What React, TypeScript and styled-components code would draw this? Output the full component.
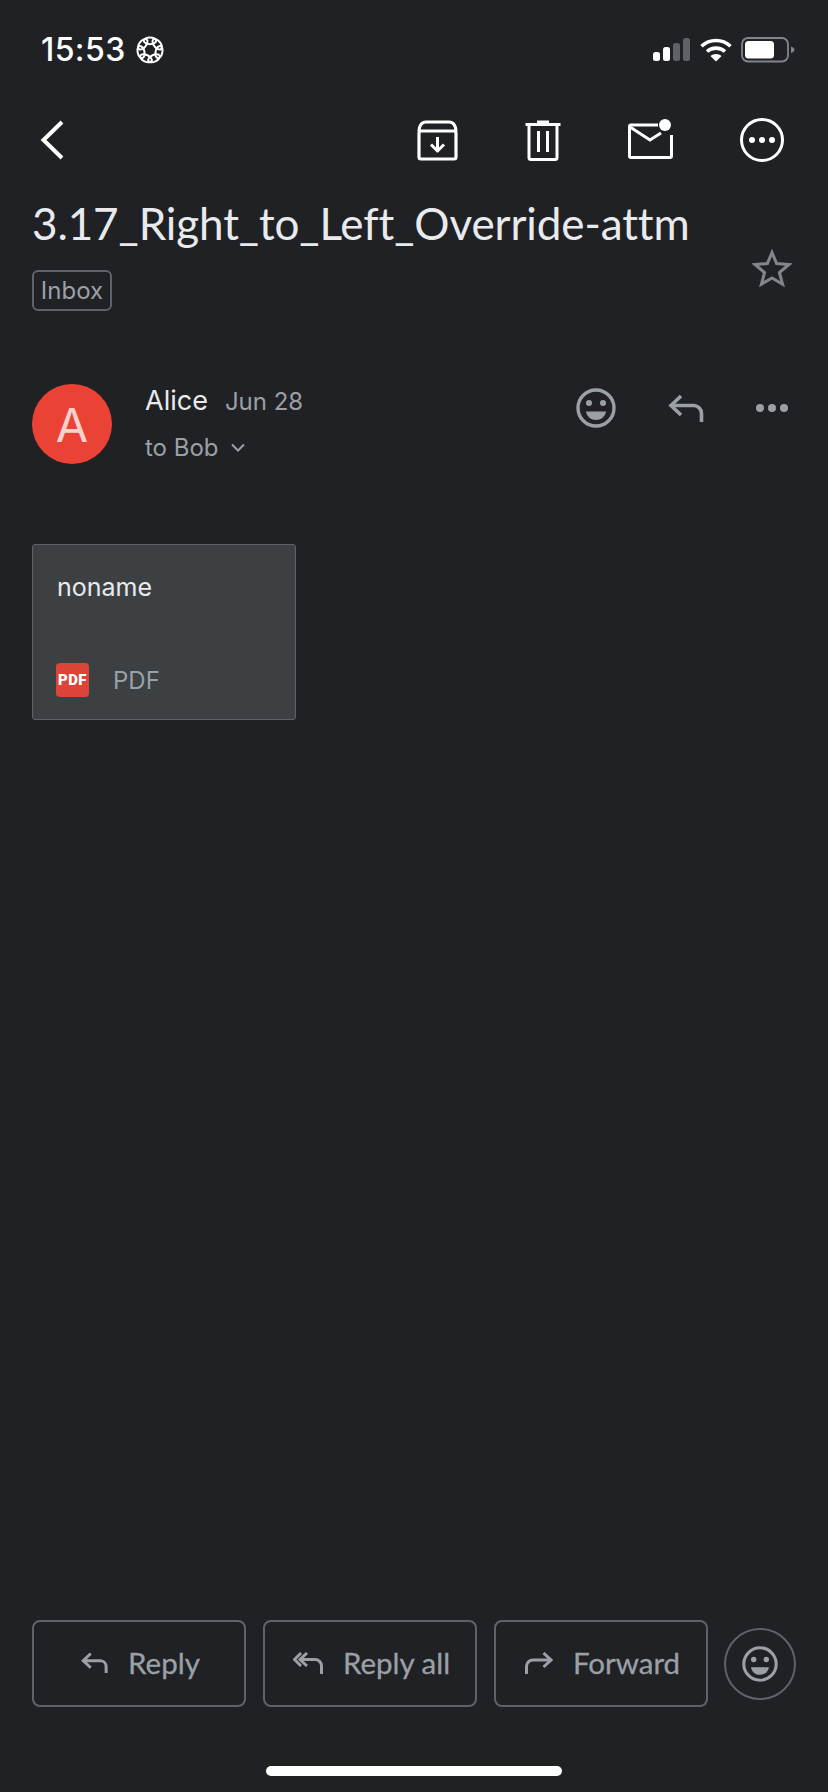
import React from "react";
import styled, { createGlobalStyle } from "styled-components";

const Global = createGlobalStyle`
  html, body { margin: 0; padding: 0; background: #202124; }
  * { box-sizing: border-box; }
`;

const Page = styled.div`
  width: 828px;
  height: 1792px;
  background: #202124;
  display: flex;
  flex-direction: column;
  font-family: Inter, "Liberation Sans", sans-serif;
  overflow: hidden;
`;

const StatusBar = styled.div`
  height: 100px;
  padding: 30px 33px 0 41px;
  display: flex;
  justify-content: space-between;
  align-items: flex-start;
`;
const StatusLeft = styled.div`
  display: flex;
  align-items: center;
  gap: 10px;
  height: 40px;
`;
const Time = styled.span`
  font-size: 32px;
  font-weight: 500;
  color: #fff;
  line-height: 40px;
  letter-spacing: 0.4px;
`;
const StatusRight = styled.div`
  display: flex;
  align-items: center;
  gap: 9.5px;
  height: 40px;
`;

const Toolbar = styled.div`
  height: 80px;
  padding: 0 44px 0 40px;
  display: flex;
  align-items: center;
  justify-content: space-between;
`;
const ToolGroup = styled.div`
  display: flex;
  align-items: center;
  gap: 67px;
`;

const SubjectRow = styled.div`
  padding: 18px 36px 0 32px;
  display: flex;
  justify-content: space-between;
  align-items: flex-end;
`;
const SubjectText = styled.div`
  display: flex;
  flex-direction: column;
  align-items: flex-start;
  gap: 22px;
`;
const Subject = styled.h1`
  margin: 0;
  font-family: Lato, sans-serif;
  font-size: 44px;
  font-weight: 400;
  line-height: 50px;
  color: #e8eaed;
  white-space: nowrap;
  letter-spacing: -0.1px;
`;
const Chip = styled.span`
  width: 80px;
  height: 41px;
  border: 2px solid #5f6368;
  border-radius: 6px;
  display: flex;
  align-items: center;
  justify-content: center;
  font-size: 24px;
  color: #9aa0a6;
`;
const StarWrap = styled.div`
  display: flex;
  margin-bottom: 24px;
`;

const SenderRow = styled.div`
  margin-top: 73px;
  padding: 0 40px 0 32px;
  display: flex;
  align-items: flex-start;
`;
const Avatar = styled.div`
  width: 80px;
  height: 80px;
  border-radius: 50%;
  background: #ea4335;
  color: #fcd2cd;
  display: flex;
  align-items: center;
  justify-content: center;
  font-size: 47px;
  font-weight: 400;
`;
const SenderInfo = styled.div`
  margin-left: 33px;
  flex: 1;
  display: flex;
  flex-direction: column;
  gap: 9px;
`;
const NameLine = styled.div`
  display: flex;
  align-items: baseline;
  gap: 17px;
  height: 36px;
  line-height: 34px;
`;
const Name = styled.span`
  font-size: 27px;
  color: #e8eaed;
`;
const DateText = styled.span`
  font-size: 24px;
  color: #9aa0a6;
`;
const ToLine = styled.div`
  display: flex;
  align-items: center;
  gap: 12px;
  height: 36px;
  font-size: 24px;
  color: #9aa0a6;
`;
const SenderActions = styled.div`
  display: flex;
  align-items: center;
  gap: 52px;
  height: 48px;
`;

const Attachment = styled.div`
  margin: 79px 0 0 32px;
  width: 264px;
  height: 176px;
  background: #3c4043;
  border: 1px solid #5f6368;
  border-radius: 3px;
  padding: 24px 24px 0;
  display: flex;
  flex-direction: column;
`;
const FileName = styled.div`
  font-size: 25px;
  line-height: 36px;
  color: #e8eaed;
`;
const FileMeta = styled.div`
  margin-top: 58px;
  margin-left: -1px;
  display: flex;
  align-items: center;
  gap: 24px;
  font-size: 24px;
  color: #9aa0a6;
`;
const PdfBadge = styled.span`
  width: 33px;
  height: 34px;
  border-radius: 4px;
  background: #dc4437;
  color: #fff;
  font-family: Roboto, sans-serif;
  font-size: 15px;
  font-weight: 900;
  display: flex;
  align-items: center;
  justify-content: center;
  letter-spacing: 0.4px;
`;

const Footer = styled.div`
  margin-top: auto;
  padding: 0 32px;
  display: flex;
  align-items: center;
  gap: 17px;
  height: 87px;
`;
const ActionButton = styled.button`
  width: 214px;
  height: 87px;
  background: transparent;
  border: 2px solid #5f6368;
  border-radius: 8px;
  display: flex;
  align-items: center;
  justify-content: center;
  gap: 20px;
  padding: 0 0 2px 3px;
  font-family: Lato, sans-serif;
  font-size: 29.5px;
  font-weight: 400;
  color: #9aa0a6;
  -webkit-text-stroke: 0.3px #9aa0a6;
`;
const RoundButton = styled.button`
  width: 72px;
  height: 72px;
  margin-left: -1px;
  border-radius: 50%;
  border: 2px solid #5f6368;
  background: transparent;
  padding: 0;
  display: flex;
  align-items: center;
  justify-content: center;
`;
const HomeZone = styled.div`
  height: 85px;
  padding-top: 59px;
  display: flex;
  justify-content: center;
`;
const HomeBar = styled.div`
  width: 296px;
  height: 10px;
  border-radius: 5px;
  background: #fff;
`;

const Flower = () => (
  <svg width="28" height="28" viewBox="0 0 28 28" fill="none" stroke="#fff" strokeWidth="2">
    {[0, 1, 2, 3, 4, 5, 6].map((i) => (
      <ellipse key={i} cx="14" cy="4.8" rx="6.2" ry="3.4" transform={`rotate(${(i * 360) / 7} 14 14)`} />
    ))}
  </svg>
);
const Signal = () => (
  <svg width="37" height="24" viewBox="0 0 37 24">
    <rect x="0" y="14" width="7" height="9" rx="2.5" fill="#fff" />
    <rect x="10" y="9" width="7" height="14" rx="2.5" fill="#fff" />
    <rect x="20" y="5" width="7" height="18" rx="2.5" fill="#5f6368" />
    <rect x="30" y="0" width="7" height="23" rx="2.5" fill="#5f6368" />
  </svg>
);
const Wifi = () => (
  <svg width="32" height="24" viewBox="0 0 32 24" fill="none" stroke="#fff" strokeWidth="3.6">
    <path d="M1.5 8.2 C9.5 0.6 22.5 0.6 30.5 8.2" />
    <path d="M7 13.5 C12 9 20 9 25 13.5" />
    <path d="M16 23.5 L10.4 18 C13.5 15.2 18.5 15.2 21.6 18 Z" fill="#fff" stroke="none" />
  </svg>
);
const Battery = () => (
  <svg width="54" height="26" viewBox="0 0 54 26">
    <rect x="1" y="1" width="46" height="23.5" rx="6" fill="none" stroke="#80868b" strokeWidth="1.8" />
    <rect x="4" y="4" width="29" height="17.5" rx="3.5" fill="#fff" />
    <path d="M50 9.5 C52.5 10.5 53.5 11.5 53.5 12.8 C53.5 14 52.5 15 50 16 Z" fill="#80868b" />
  </svg>
);
const Back = () => (
  <svg width="24" height="40" viewBox="0 0 24 40" fill="none" stroke="#fff" strokeWidth="4">
    <path d="M22 2 L3.5 20 L22 38" />
  </svg>
);
const Archive = () => (
  <svg width="41" height="41" viewBox="0 0 41 41" fill="none" stroke="#fff" strokeWidth="3.2" strokeLinejoin="round">
    <path d="M2 11 C2 7 4 2 9 2 H32 C37 2 39 7 39 11" />
    <rect x="2" y="11" width="37" height="28" rx="2" />
    <path d="M20.5 17 V30.5 M14 24.5 L20.5 31 L27 24.5" strokeWidth="3" />
  </svg>
);
const Trash = () => (
  <svg width="36" height="41" viewBox="0 0 36 41" fill="none" stroke="#fff" strokeWidth="3">
    <path d="M0.5 4.5 H35.5 M12 2 H24" />
    <path d="M4 4 V37.5 A2 2 0 0 0 6 39.5 H30 A2 2 0 0 0 32 37.5 V4" />
    <path d="M13.5 11 V32 M22.5 11 V32" />
  </svg>
);
const MailDot = () => (
  <svg width="45" height="42" viewBox="0 0 45 42" fill="none" stroke="#fff" strokeWidth="3">
    <path d="M30 6 H3 A1.5 1.5 0 0 0 1.5 7.5 V37 A1.5 1.5 0 0 0 3 38.5 H42 A1.5 1.5 0 0 0 43.5 37 V16" />
    <path d="M2 8 L22 21 L33 14" />
    <circle cx="37" cy="6" r="6" fill="#fff" stroke="none" />
  </svg>
);
const MoreCircle = () => (
  <svg width="44" height="44" viewBox="0 0 44 44" fill="none">
    <circle cx="22" cy="22" r="20.5" stroke="#fff" strokeWidth="3" />
    <circle cx="12" cy="22" r="3" fill="#fff" />
    <circle cx="22" cy="22" r="3" fill="#fff" />
    <circle cx="32" cy="22" r="3" fill="#fff" />
  </svg>
);
const Star = () => (
  <svg width="40" height="38" viewBox="0 0 40 38" fill="none" stroke="#80868b" strokeWidth="3" strokeLinejoin="miter">
    <path d="M20 3.5 L24.6 14.6 L37 15.5 L27.4 23.5 L30.6 35.2 L20 29 L9.4 35.2 L12.6 23.5 L3 15.5 L15.4 14.6 Z" />
  </svg>
);
const Smile = ({ size, color }: { size: number; color: string }) => (
  <svg width={size} height={size} viewBox="0 0 40 40" fill="none">
    <circle cx="20" cy="20" r="18" stroke={color} strokeWidth="3.4" />
    <circle cx="13" cy="15" r="3" fill={color} />
    <circle cx="27" cy="15" r="3" fill={color} />
    <path d="M10 23.5 H30 C29 29 25 32 20 32 C15 32 11 29 10 23.5 Z" fill={color} />
  </svg>
);
const ReplyIcon = ({ w, h, sw }: { w: number; h: number; sw: number }) => (
  <svg width={w} height={h} viewBox="0 0 36 28" fill="none" stroke="#9aa0a6" strokeWidth={sw}>
    <path d="M13 2 L3 11.5 L13 21" />
    <path d="M3 11.5 H26 A8 8 0 0 1 33.5 19.5 V28" />
  </svg>
);
const ReplyAllIcon = () => (
  <svg width="30" height="22" viewBox="0 0 30 22" fill="none" stroke="#9aa0a6" strokeWidth="3">
    <path d="M8 1 L1.5 7.5 L8 14" />
    <path d="M14 1 L7 7.5 L14 14" />
    <path d="M7 7.5 H22 A6.5 6.5 0 0 1 28.5 14 V22" />
  </svg>
);
const ForwardIcon = () => (
  <svg width="28" height="22" viewBox="0 0 28 22" fill="none" stroke="#9aa0a6" strokeWidth="3">
    <path d="M18.5 1 L26 8 L18.5 15" />
    <path d="M26 8 H8 A6.5 6.5 0 0 0 1.5 14.5 V22" />
  </svg>
);
const Dots = () => (
  <svg width="32" height="12" viewBox="0 0 32 12" fill="#9aa0a6">
    <circle cx="4" cy="6" r="4" />
    <circle cx="16" cy="6" r="4" />
    <circle cx="28" cy="6" r="4" />
  </svg>
);
const Caret = () => (
  <svg width="14" height="9" viewBox="0 0 14 9" fill="none" stroke="#9aa0a6" strokeWidth="2">
    <path d="M1 1.5 L7 7.5 L13 1.5" />
  </svg>
);

export default function App() {
  return (
    <Page>
      <Global />
      <StatusBar>
        <StatusLeft>
          <Time>15:53</Time>
          <Flower />
        </StatusLeft>
        <StatusRight>
          <Signal />
          <Wifi />
          <Battery />
        </StatusRight>
      </StatusBar>
      <Toolbar>
        <Back />
        <ToolGroup>
          <Archive />
          <Trash />
          <MailDot />
          <MoreCircle />
        </ToolGroup>
      </Toolbar>
      <SubjectRow>
        <SubjectText>
          <Subject>3.17_Right_to_Left_Override-attm</Subject>
          <Chip>Inbox</Chip>
        </SubjectText>
        <StarWrap>
          <Star />
        </StarWrap>
      </SubjectRow>
      <SenderRow>
        <Avatar>A</Avatar>
        <SenderInfo>
          <NameLine>
            <Name>Alice</Name>
            <DateText>Jun 28</DateText>
          </NameLine>
          <ToLine>
            to Bob <Caret />
          </ToLine>
        </SenderInfo>
        <SenderActions>
          <Smile size={40} color="#9aa0a6" />
          <ReplyIcon w={36} h={28} sw={3.6} />
          <Dots />
        </SenderActions>
      </SenderRow>
      <Attachment>
        <FileName>noname</FileName>
        <FileMeta>
          <PdfBadge>PDF</PdfBadge>
          PDF
        </FileMeta>
      </Attachment>
      <Footer>
        <ActionButton>
          <ReplyIcon w={27} h={21} sw={4} />
          Reply
        </ActionButton>
        <ActionButton>
          <ReplyAllIcon />
          Reply all
        </ActionButton>
        <ActionButton>
          <ForwardIcon />
          Forward
        </ActionButton>
        <RoundButton>
          <Smile size={36} color="#9aa0a6" />
        </RoundButton>
      </Footer>
      <HomeZone>
        <HomeBar />
      </HomeZone>
    </Page>
  );
}
